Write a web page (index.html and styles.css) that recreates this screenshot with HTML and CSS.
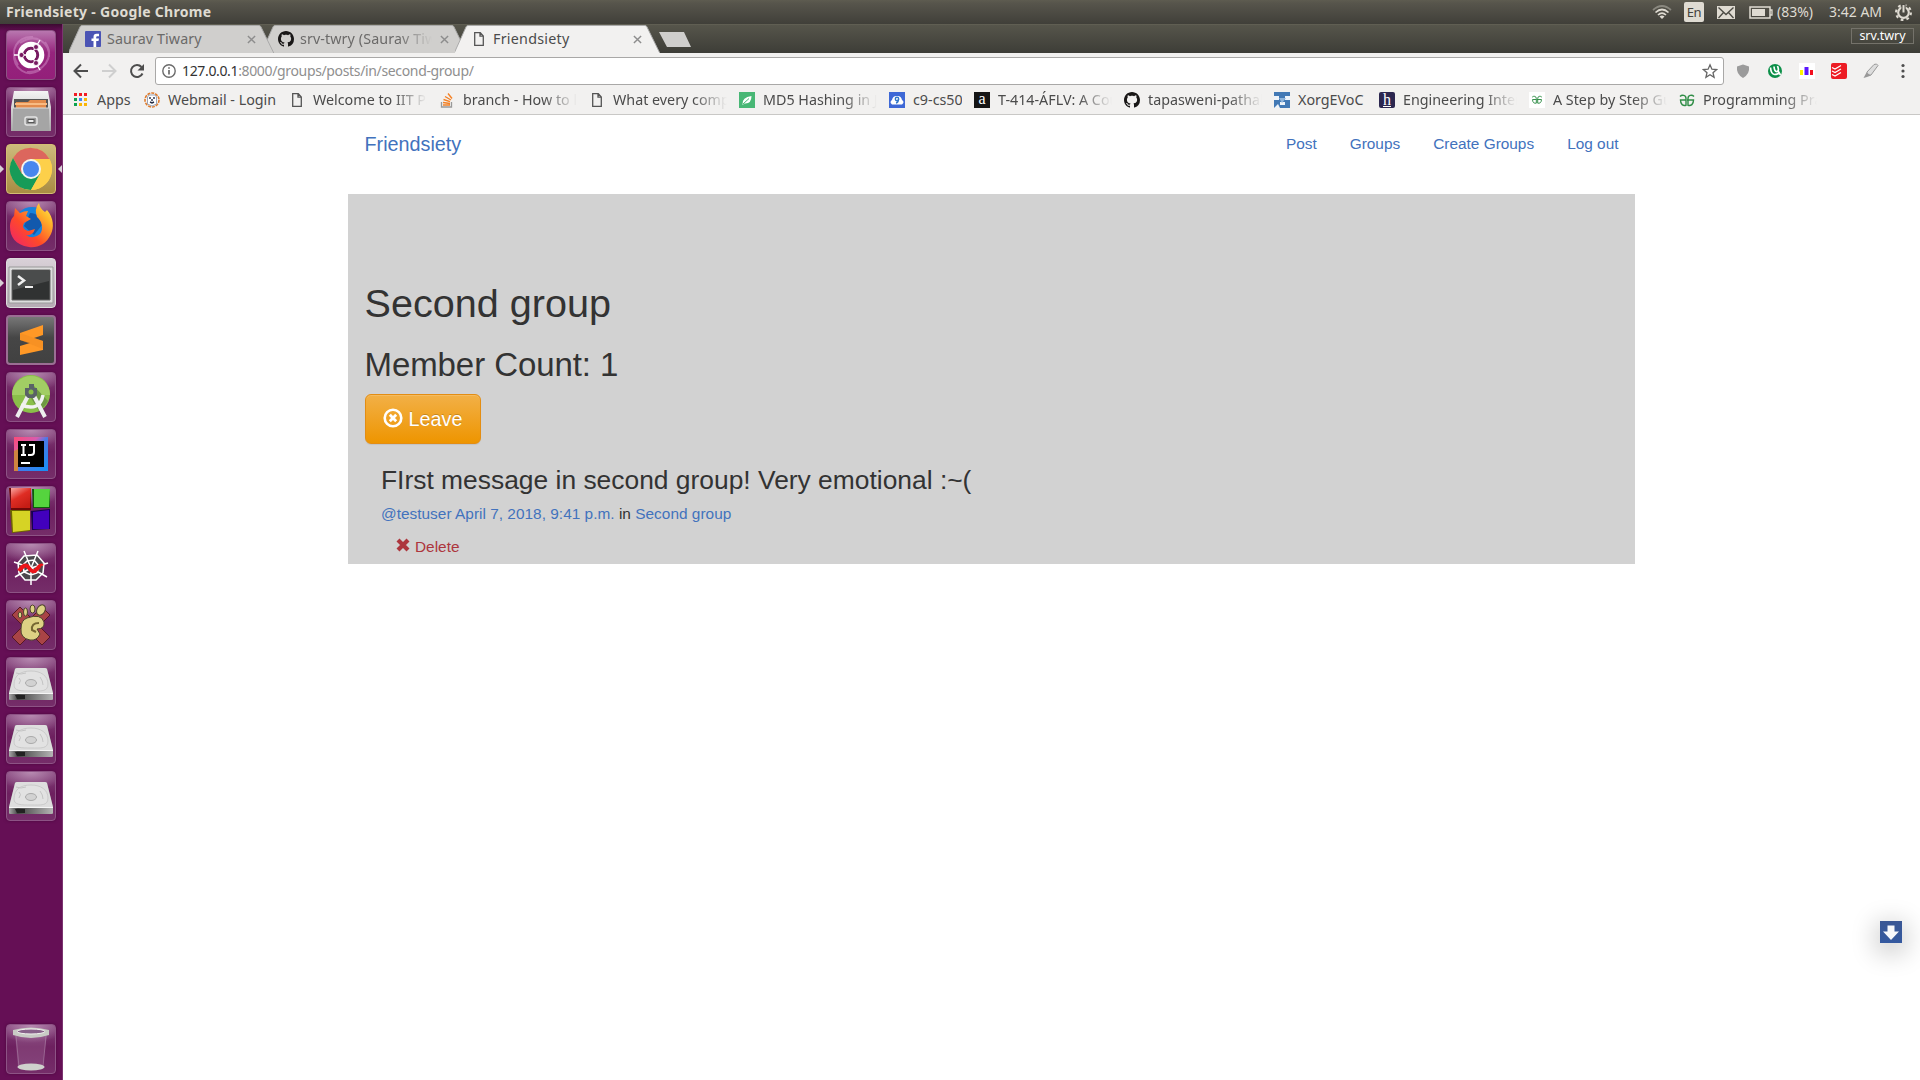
FILE: index.html
```html
<!DOCTYPE html>
<html lang="en">
<head>
<meta charset="utf-8">
<title>Friendsiety</title>
<link rel="stylesheet" href="styles.css">
</head>
<body>
<svg class="defs" aria-hidden="true">
  <defs>
    <linearGradient id="metal" x2="0" y2="1"><stop stop-color="#f4f4f4"/><stop offset="1" stop-color="#a8a8a8"/></linearGradient>
    <linearGradient id="side" x2="1"><stop stop-color="#aaa"/><stop offset=".2" stop-color="#444"/><stop offset="1" stop-color="#b5b5b5"/></linearGradient>
    <linearGradient id="fox" x1="0" y1="1" x2="1" y2="0"><stop stop-color="#ee1f72"/><stop offset=".4" stop-color="#ff4a28"/><stop offset=".75" stop-color="#ffb52a"/><stop offset="1" stop-color="#fff45a"/></linearGradient>
    <linearGradient id="idea" x2="1" y2="1"><stop stop-color="#fc4a77"/><stop offset=".35" stop-color="#d95cae"/><stop offset=".5" stop-color="#4a7ae8"/><stop offset="1" stop-color="#1590f5"/></linearGradient>
    <linearGradient id="red" x2=".6" y2="1"><stop stop-color="#f9aaa5"/><stop offset=".5" stop-color="#df2d24"/><stop offset="1" stop-color="#c51d15"/></linearGradient>
    <symbol id="page" viewBox="0 0 16 16"><path d="M3.7 1.7h5.6l3 3.2v9.4H3.7zM9 2v3.2h3" fill="none" stroke="#555" stroke-width="1.3"/></symbol>
    <symbol id="octocat" viewBox="0 0 16 16"><path fill="#191717" d="M8 0C3.58 0 0 3.58 0 8c0 3.54 2.29 6.53 5.47 7.59.4.07.55-.17.55-.38 0-.19-.01-.82-.01-1.49-2.01.37-2.53-.49-2.69-.94-.09-.23-.48-.94-.82-1.13-.28-.15-.68-.52-.01-.53.63-.01 1.08.58 1.23.82.72 1.21 1.87.87 2.33.66.07-.52.28-.87.51-1.07-1.78-.2-3.64-.89-3.64-3.95 0-.87.31-1.59.82-2.15-.08-.2-.36-1.02.08-2.12 0 0 .67-.21 2.2.82.64-.18 1.32-.27 2-.27s1.36.09 2 .27c1.53-1.04 2.2-.82 2.2-.82.44 1.1.16 1.92.08 2.12.51.56.82 1.27.82 2.15 0 3.07-1.87 3.75-3.65 3.95.29.25.54.73.54 1.48 0 1.07-.01 1.93-.01 2.2 0 .21.15.46.55.38A8 8 0 0 0 16 8c0-4.42-3.58-8-8-8z"/></symbol>
    <symbol id="close" viewBox="0 0 10 10"><path d="M1 1l8 8M9 1L1 9" stroke="#8d8d8d" stroke-width="1.6"/></symbol>
    <symbol id="geeks" viewBox="0 0 16 16"><path d="M1 4.500C3 2.500 7 3 7 6.500V13.300C4 14 1.500 12.500 1.500 8H7M15 4.500C13 2.500 9 3 9 6.500V13.300C12 14 14.500 12.500 14.500 8H8" fill="none" stroke="#2f8d46" stroke-width="1.4"/></symbol>
    <symbol id="tabshape" viewBox="0 0 205 28"><path d="M-1 28.500L11 2Q11.500 .5 13 .5H190Q191.500 .5 192 2L205 28.500z" stroke="#aaa"/></symbol>
    <symbol id="disk" viewBox="0 0 50 50">
      <path d="M9 12Q9.500 11 11 11H39Q40.500 11 41 12L47 36V42Q47 43 45 43H5Q3 43 3 42V36z" fill="#777"/>
      <path d="M9 12Q9.500 11 11 11H39Q40.500 11 41 12L47 36H3z" fill="#dedede"/>
      <path d="M3 36H47V42Q47 43 45 43H5Q3 43 3 42z" fill="url(#side)"/><path d="M3 36.500H47" stroke="#f5f5f5"/>
      <path d="M8 28C8 18 15 14 25 14S42 19 42 27 35 34 25 34 8 34 8 28z" fill="#e2e2e2" stroke="#c4c4c4" stroke-width=".8"/>
      <ellipse cx="25" cy="26" rx="5.500" ry="3.500" fill="#d2d2d2" stroke="#aaa"/>
      <path d="M10 16q5 2 10 0M34 20q3 4 3 8M13 21q3 2 0 6" fill="none" stroke="#c4c4c4"/><path d="M9 38H19V42H11z" fill="#222"/>
    </symbol>
  </defs>
</svg>

<header class="panel">
  <div class="panel-title">Friendsiety - Google Chrome</div>
  <div class="indicators">
    <svg class="wifi" viewBox="0 0 20 14"><g fill="none" stroke="#dfdbd2" stroke-width="1.700"><path d="M1 5Q10-3 19 5" opacity=".4"/><path d="M3.500 7.500Q10 1.500 16.500 7.500"/><path d="M6 10Q10 6 14 10"/></g><path d="M7.500 11.500Q10 9.500 12.500 11.500L10 14z" fill="#dfdbd2"/></svg>
    <span class="lang">En</span>
    <svg class="mail" viewBox="0 0 18 13"><path d="M0 0H18V13H0z" fill="#dfdbd2"/><path d="M1.500 1.500L9 8.500 16.500 1.500M1.500 12L6.500 6.500M16.500 12L11.500 6.500" fill="none" stroke="#4b4a43" stroke-width="1.300"/></svg>
    <svg class="battery" viewBox="0 0 24 13"><path d="M1 1H21V12H1z" fill="none" stroke="#dfdbd2" stroke-width="1.500"/><path d="M3 3H16V10H3z" fill="#dfdbd2"/><path d="M21 4H23V9H21" fill="none" stroke="#dfdbd2" stroke-width="1.300"/></svg>
    <span class="percent">(83%)</span>
    <span class="clock">3:42 AM</span>
    <svg class="cog" viewBox="0 0 16 16"><circle cx="8" cy="8" r="5" fill="none" stroke="#dfdbd2" stroke-width="2"/><circle cx="8" cy="8" r="7" fill="none" stroke="#dfdbd2" stroke-width="2" stroke-dasharray="2.600 2.898"/><path d="M6 0h4v8H6z" fill="#4c4b44"/><path d="M8 1v7" stroke="#dfdbd2" stroke-width="1.900"/></svg>
  </div>
</header>

<div class="desktop">
  <aside class="launcher">
    <div class="tile dash"><svg viewBox="0 0 50 50"><g fill="none" stroke="#d99bd0" stroke-width="2" opacity=".45"><path d="M12 35C2 20 12 6 27 7"/><path d="M14 13C30 2 44 13 43 27"/><path d="M39 12C50 28 36 43 21 42"/><path d="M35 39C21 49 7 39 8 23"/></g><circle cx="25" cy="25" r="13.300" fill="#fff"/><circle cx="25" cy="25" r="6.700" fill="none" stroke="#771a61" stroke-width="3"/><path d="M25 25L34 40M25 25L34 10M25 25H8" stroke="#fff" stroke-width="1.300"/><circle cx="25" cy="25" r="5.200" fill="#fff"/><g fill="#771a61" stroke="#fff" stroke-width=".8"><circle cx="15.500" cy="25" r="2.500"/><circle cx="30" cy="17" r="2.500"/><circle cx="30" cy="33" r="2.500"/></g></svg></div>
    <div class="tile"><svg viewBox="0 0 50 50"><path d="M8 4H42L45 20V44H5V20z" fill="url(#metal)"/><path d="M8 12H42V21H8z" fill="#555"/><path d="M10 15H22L24 13H40V22H10z" fill="#e38b4b"/><path d="M9 17H41" stroke="#f8bb82" stroke-width="2"/><path d="M7 21H43V44H7z" fill="#a5a5a5"/><path d="M7 21H43" stroke="#ddd"/><rect x="19" y="30" width="12" height="8" rx="2" fill="#999" stroke="#e4e4e4" stroke-width="1.500"/><rect x="22" y="32.500" width="6" height="3" fill="#eee" stroke="#555"/></svg></div>
    <div class="tile chrome running focused"><svg viewBox="0 0 50 50"><circle cx="25" cy="25" r="21" fill="#fdd04a"/><path d="M7 14A21 21 0 0 1 43.500 15H25L16 30z" fill="#dc665d"/><path d="M7 14A21 21 0 0 0 25 46L34 30 16 30z" fill="#179b58"/><path d="M25 46A21 21 0 0 0 43.500 15H25L34 30z" fill="#fdd04a"/><circle cx="25" cy="25" r="10" fill="#f5f5ee"/><circle cx="25" cy="25" r="8" fill="#4886ee"/></svg></div>
    <div class="tile"><svg viewBox="0 0 50 50"><circle cx="26" cy="24" r="18" fill="#1683dd"/><path d="M24 12Q34 12 36 24L28 34 18 25z" fill="#1259ad"/><path d="M9 7L14 12Q18 10 22 10L20 15 25 18 18 22Q15 28 22 30L29 28Q27 35 20 34 27 39 34 33C38 28 36 20 31 16Q28 8 33 2 34 8 39 11L41 9C48 17 48 27 45 33 40 44 31 47 23 46 9 44 4 35 4 26 4 20 6 17 8 15z" fill="url(#fox)"/></svg></div>
    <div class="tile terminal running"><svg viewBox="0 0 50 50"><path d="M3 9H47V45H3z" fill="#ddd" stroke="#999"/><path d="M6 12H44V42H6z" fill="#303232" stroke="#666"/><path d="M7 13H43V23L7 32z" fill="#4a4c4c"/><path d="M12 18L18 22.500 12 27" fill="none" stroke="#eee" stroke-width="2.500"/><path d="M19 29H27" stroke="#eee" stroke-width="2"/></svg></div>
    <div class="tile sublime"><svg viewBox="0 0 50 50"><path d="M14 18L37 10V20L28 23 37 26V35L14 40V31L24 28 14 25z" fill="#ff9826"/><path d="M14 25V18L37 26V34z" fill="#f08a20" opacity=".5"/></svg></div>
    <div class="tile"><svg viewBox="0 0 50 50"><circle cx="25" cy="22" r="19" fill="#8abf49"/><path d="M6 23A19 19 0 0 1 44 23z" fill="#a2ce64"/><path d="M28 14L42 29Q38 36 33 39L23 23z" fill="#6e9843"/><path d="M23 22L11 45M27 22L39 45" stroke="#eee" stroke-width="4"/><path d="M15 33Q34 40 37 23" fill="none" stroke="#f2f2f2" stroke-width="3.500"/><path d="M23 12H28V16H31V23L28 26H22L19 23V16H23z" fill="#5a6267"/><circle cx="25" cy="20" r="2.500" fill="#8abf49"/></svg></div>
    <div class="tile"><svg viewBox="0 0 50 50"><path d="M8 8H42V42H8z" fill="url(#idea)"/><path d="M8 22L12 20V42H8z" fill="#ce8440"/><path d="M12 12H38V38H12z" fill="#000"/><path d="M15 16H20M17.500 16V26M15 26H20M23 16H28V23Q28 26 25 26H22" fill="none" stroke="#fff" stroke-width="2"/><path d="M15 34H24" stroke="#fff" stroke-width="2"/></svg></div>
    <div class="tile"><svg viewBox="0 0 50 50"><path d="M3 2H25V24H5z" fill="#6f0808"/><path d="M5 2H25L24 22H5z" fill="url(#red)"/><path d="M26 3H44V22H27z" fill="#0b5c0b"/><path d="M28 3H44L43 21H28z" fill="#55d43e"/><path d="M4 24H24V45L6 47z" fill="#6d6500"/><path d="M6 25H24V44L7 46z" fill="#d6d325"/><path d="M25 25L44 23V43L26 44z" fill="#150053"/><path d="M27 26L43 24V43H27z" fill="#4200bd"/></svg></div>
    <div class="tile"><svg viewBox="0 0 50 50"><path d="M18 13L31 12 38 20 37 30 30 37H19L13 30 12 20z" fill="#4c484d"/><path d="M18 13L31 12 38 20 37 30 30 37H19L13 30 12 20zM21 18L28 17 33 23 31 30 25 32 18 29 17 22zM25 25L18 8M25 25L32 8M25 25L42 20M25 25L41 34M25 25V42M25 25L9 34M25 25L8 19" fill="none" stroke="#fff" stroke-width="1.500"/><path d="M13 28Q19 19 23 25T31 26T36 23" fill="none" stroke="#ed151a" stroke-width="4"/></svg></div>
    <div class="tile"><svg viewBox="0 0 50 50"><path d="M6 15L14 7 25 18 36 7 44 15 33 26 44 37 36 45 25 34 14 45 6 37 17 26z" fill="#a94446" stroke="#571824"/><path d="M21 18Q35 13 38 22 39 29 31 29L34 34Q31 41 24 40 14 38 15 29 15 20 21 18z" fill="#ddd184" stroke="#4d432d"/><path d="M33 23Q25 23 26 30L30 32" fill="none" stroke="#756732" stroke-width="2"/><g fill="#ddd184" stroke="#4d432d"><ellipse cx="35" cy="10" rx="4" ry="5.500" transform="rotate(30 35 10)"/><ellipse cx="26.500" cy="9" rx="2.500" ry="4"/><ellipse cx="19.500" cy="12" rx="2" ry="4"/><ellipse cx="14" cy="15" rx="1.800" ry="3"/></g></svg></div>
    <div class="tile"><svg><use href="#disk"/></svg></div>
    <div class="tile"><svg><use href="#disk"/></svg></div>
    <div class="tile"><svg><use href="#disk"/></svg></div>
    <div class="tile trash"><svg viewBox="0 0 50 50"><path d="M9 10H41L37 43Q25 49 12 43z" fill="#c7a5c4" opacity=".2"/><path d="M10 12L13 43M40 12L37 43" stroke="#c0a3bf" opacity=".4"/><ellipse cx="25" cy="43" rx="13.500" ry="3.500" fill="#cfd1cc"/><path d="M7 6Q25 1 43 6V11Q25 17 7 11z" fill="#c9cbc5"/><ellipse cx="25" cy="7.500" rx="14" ry="2.500" fill="#88628a" stroke="#f1f1ee"/></svg></div>
  </aside>

  <main class="browser">
    <div class="tabstrip">
      <div class="tab back1"><svg class="shape"><use href="#tabshape"/></svg>
        <svg class="ico" viewBox="0 0 16 16"><rect width="16" height="16" rx="1" fill="#4b54b4"/><path d="M8.500 16V10H6.500V7.500H8.500V6Q8.500 2.800 11.500 2.800H14V5.200H12.300Q11.200 5.200 11.200 6.300V7.500H14L13.500 10H11.200V16z" fill="#fff"/></svg>
        <span class="tab-text">Saurav Tiwary</span><svg class="x"><use href="#close"/></svg></div>
      <div class="tab back2"><svg class="shape"><use href="#tabshape"/></svg>
        <svg class="ico"><use href="#octocat"/></svg>
        <span class="tab-text fade">srv-twry (Saurav Tiwary)</span><svg class="x"><use href="#close"/></svg></div>
      <div class="tab active"><svg class="shape"><use href="#tabshape"/></svg>
        <svg class="ico"><use href="#page"/></svg>
        <span class="tab-text">Friendsiety</span><svg class="x"><use href="#close"/></svg></div>
      <div class="newtab"></div>
      <div class="profile">srv.twry</div>
    </div>
    <div class="toolbar">
      <svg class="nav" viewBox="0 0 16 16"><path d="M15 8H2M8 1.500L1.500 8 8 14.500" fill="none" stroke="#4d4d4d" stroke-width="2"/></svg>
      <svg class="nav" viewBox="0 0 16 16"><path d="M1 8H14M8 1.500L14.500 8 8 14.500" fill="none" stroke="#cfcfcf" stroke-width="2"/></svg>
      <svg class="nav" viewBox="0 0 16 16"><path d="M13.500 10.500A6 6 0 1 1 12.500 4" fill="none" stroke="#4d4d4d" stroke-width="2"/><path d="M15 1V7.500H8.500z" fill="#4d4d4d"/></svg>
      <div class="omnibox">
        <svg class="info" viewBox="0 0 14 14"><circle cx="7" cy="7" r="6.200" fill="none" stroke="#6b6b6b" stroke-width="1.400"/><path d="M7 6V10.500M7 3.300V4.800" stroke="#6b6b6b" stroke-width="1.700"/></svg>
        <span class="url"><b>127.0.0.1</b>:8000/groups/posts/in/second-group/</span>
        <svg class="star" viewBox="0 0 16 16"><path d="M8 1.800L9.900 6.200 14.600 6.600 11 9.700 12.100 14.300 8 11.800 3.900 14.300 5 9.700 1.400 6.600 6.100 6.200z" fill="none" stroke="#666" stroke-width="1.300"/></svg>
      </div>
      <div class="extensions">
        <svg viewBox="0 0 16 16"><path d="M8 1.500L14 3.500Q15 11 8 15 1 11 2 3.500z" fill="#9b9b9b"/></svg>
        <svg viewBox="0 0 16 16"><circle cx="8" cy="8" r="7" fill="#0b8f48"/><path d="M3.500 4.500Q4 11 7.500 11.500M7 3.500Q7.500 9 10 8.500T10.500 3M7.500 11.500Q11 11.500 12 9.500L13.500 12" fill="none" stroke="#fff" stroke-width="1.700"/></svg>
        <svg viewBox="0 0 16 16"><path d="M0 0H16V16H0z" fill="#fff"/><path d="M1 7H4V12H1z" fill="#fff200"/><path d="M5.500 4H9.500V12H5.500z" fill="#5a16ff"/><path d="M11 7H14V12H11z" fill="#f20e1d"/></svg>
        <svg viewBox="0 0 16 16"><rect width="16" height="16" rx="2" fill="#ed1c24"/><path d="M1 4.500L4 6 10 2.500M1 8L4 9.500 10 6M1 11.500L4 13 10 9.500" fill="none" stroke="#fff" stroke-width="1.200"/></svg>
        <svg viewBox="0 0 16 16"><path d="M4 9L11 1.500Q14 0 15 2.500L8 12 4 12.500z" fill="#ddd" stroke="#999"/><path d="M3.500 9.500L8 12.500 4 14 .5 15z" fill="#999"/></svg>
        <svg viewBox="0 0 16 16"><g fill="#4d4d4d"><circle cx="8" cy="2.500" r="1.600"/><circle cx="8" cy="8" r="1.600"/><circle cx="8" cy="13.500" r="1.600"/></g></svg>
      </div>
    </div>
    <div class="bookmarks">
      <div class="bm apps"><svg viewBox="0 0 16 16"><g fill="#f21b24"><path d="M1 1h3v3H1zM6 1h3v3H6zM11 1h3v3h-3z"/></g><path d="M1 6h3v3H1zM1 11h3v3H1z" fill="#0ba24f"/><path d="M6 6h3v3H6z" fill="#4285f4"/><path d="M11 6h3v3h-3zM6 11h3v3H6zM11 11h3v3h-3z" fill="#fbb605"/></svg><span>Apps</span></div>
      <div class="bm webmail"><svg viewBox="0 0 16 16"><circle cx="8" cy="8" r="7" fill="#f4f4f6" stroke="#e07b2b" stroke-width="1.600" stroke-dasharray="3 1"/><path d="M3.500 12V5L5 3H11L12.500 5V12L8 14z" fill="#fff" stroke="#9ba4b6"/><path d="M6 5V7M10 5V7M8 7V9M6 10L8 11 10 10" fill="none" stroke="#222b43" stroke-width="1.400"/></svg><span>Webmail - Login</span></div>
      <div class="bm"><svg><use href="#page"/></svg><span class="fade">Welcome to IIT Patna</span></div>
      <div class="bm"><svg viewBox="0 0 16 16"><path d="M2.500 10V15H12.500V10" fill="none" stroke="#999" stroke-width="1.300"/><path d="M4 13H11M4 10.500L11 11.500M4.500 7.500L11 9.700M6 4.500L12 8M9 1.500L13 6.500" stroke="#f48024" stroke-width="1.400"/></svg><span class="fade">branch - How to list</span></div>
      <div class="bm"><svg><use href="#page"/></svg><span class="fade">What every computer</span></div>
      <div class="bm"><svg viewBox="0 0 16 16"><path d="M0 0H16V16H0z" fill="#48b775"/><path d="M3.500 12.500Q3 5 12.500 4 12.500 12 5.500 11.500L3.500 13z" fill="#fff"/><path d="M4 12L10 6.500" stroke="#48b775"/></svg><span class="fade">MD5 Hashing in Java</span></div>
      <div class="bm c9"><svg viewBox="0 0 16 16"><path d="M0 0H16V16H0z" fill="#3e68d6"/><path d="M3 12.500Q0 10 3 8 4 3.500 8 4 12 3.500 13 8 16 10 13 12.500z" fill="#fff"/><circle cx="8" cy="7" r="1.700" fill="none" stroke="#3478c9" stroke-width="1.400"/><path d="M9.500 7Q9.500 10.500 7 11" fill="none" stroke="#3478c9" stroke-width="1.400"/></svg><span>c9-cs50</span></div>
      <div class="bm"><i class="letter">a</i><span class="fade">T-414-ÁFLV: A Course</span></div>
      <div class="bm"><svg><use href="#octocat"/></svg><span class="fade">tapasweni-pathak</span></div>
      <div class="bm xorg"><svg viewBox="0 0 16 16"><path d="M0 0H16V16H0z" fill="#4279b5"/><path d="M0 4H5V8H0zM11 4H16V8H11zM6 10H11V13H6zM0 16L4 12 6 16z" fill="#edf3fa"/><path d="M5 6L8 11 12 6z" fill="#8fb5dc"/></svg><span>XorgEVoC</span></div>
      <div class="bm"><i class="letter h">h</i><span class="fade">Engineering Internship</span></div>
      <div class="bm"><svg viewBox="0 0 16 16"><path d="M0 0H16V16H0z" fill="#fff"/><use href="#geeks" x="1.500" y="2" width="13" height="11"/></svg><span class="fade">A Step by Step Guide</span></div>
      <div class="bm"><svg><use href="#geeks"/></svg><span class="fade">Programming Practice</span></div>
    </div>

    <div class="webpage">
      <nav class="navbar">
        <a class="brand">Friendsiety</a>
        <div class="links"><a>Post</a><a>Groups</a><a>Create Groups</a><a>Log out</a></div>
      </nav>
      <section class="content">
        <h1>Second group</h1>
        <h2>Member Count: 1</h2>
        <a class="leave"><svg viewBox="0 0 20 20"><circle cx="10" cy="10" r="8.300" fill="none" stroke="#fff" stroke-width="2.600"/><path d="M6.800 6.800L13.200 13.200M13.200 6.800L6.800 13.200" stroke="#fff" stroke-width="2.800"/></svg>Leave</a>
        <article class="post">
          <h3>FIrst message in second group! Very emotional :~(</h3>
          <p class="meta"><a>@testuser</a> <a>April 7, 2018, 9:41 p.m.</a> in <a>Second group</a></p>
          <a class="delete"><svg viewBox="0 0 14 14"><path d="M2 2L12 12M12 2L2 12" stroke="#ad363d" stroke-width="4.200"/></svg>Delete</a>
        </article>
      </section>
    </div>
  </main>
</div>
<div class="download"><svg viewBox="0 0 22 22"><path d="M7.500 4.500H14.500V10.500H19L11 19 3 10.500H7.500z" fill="#f7f8fb"/></svg></div>
</body>
</html>
```
FILE: styles.css
```css
* { box-sizing: border-box; }
body { margin: 0; width: 1920px; height: 1080px; overflow: hidden; background: #fff; font-family: "Noto Sans", sans-serif; position: relative; }
.defs { position: absolute; width: 0; height: 0; }
svg { display: block; flex: none; }

.panel { height: 24px; display: flex; justify-content: space-between; background: linear-gradient(#5e5c50 0, #57554c 3px, #403f39 100%); color: #dfdbd2; font-size: 14px; line-height: 24px; }
.panel-title { padding-left: 6px; font-weight: 700; font-size: 14px; letter-spacing: .3px; }
.indicators { display: flex; align-items: center; padding-right: 8px; white-space: nowrap; }
.wifi { width: 20px; height: 14px; margin-right: 12px; }
.lang { width: 20px; height: 20px; background: #dfdbd2; color: #44433d; border-radius: 2px; font-size: 13px; line-height: 20px; text-align: center; margin-right: 13px; letter-spacing: -.5px; }
.mail { width: 18px; height: 13px; margin-right: 14px; }
.battery { width: 24px; height: 13px; margin-right: 4px; }
.percent { width: 38px; margin-right: 14px; letter-spacing: 0; }
.clock { width: 55px; margin-right: 11px; letter-spacing: 0; }
.cog { width: 17px; height: 17px; }

.desktop { display: flex; height: 1056px; }
.launcher { width: 63px; flex: none; display: flex; flex-direction: column; gap: 7px; padding: 6px 0 6px 6px; background: linear-gradient(#3c0a31, #650f55 7px); border-right: 1px solid #7b3470; }
.tile { width: 50px; height: 50px; flex: none; position: relative; border-radius: 4px; border: 1px solid #8d5385; background: radial-gradient(ellipse 35px 18px at 50% 0, #b78bb1, transparent), linear-gradient(#84437b, #6d205f 45%, #752d69); box-shadow: 0 0 3px #4a083d; }
.tile svg { width: 50px; height: 50px; margin: -1px; }
.dash { background: linear-gradient(#b877af, #96247d 45%, #941f7a); }
.chrome { background: linear-gradient(#cdba7c, #a98c43); border-color: #d4bd73; }
.terminal { background: linear-gradient(#d9d1d8, #b6abb4); border-color: #ddd; }
.sublime { background: linear-gradient(#777, #464646 45%, #414141); border: 2px solid #9b6e94; }
.sublime svg { margin: -2px; }
.running::before { content: ""; position: absolute; left: -7px; top: 20px; border: 4px solid transparent; border-left-color: #d8cfd6; border-right: 0; }
.focused::after { content: ""; position: absolute; right: -7px; top: 20px; border: 4px solid transparent; border-right-color: #d8cfd6; border-left: 0; }
.trash { margin-top: auto; }

.browser { flex: 1; min-width: 0; color: #4b4b4b; }
.tabstrip { height: 29px; display: flex; padding: 1px 6px 0 6px; background: linear-gradient(#69675a 0, #56554b 1px, #3d3d37 100%); }
.tab { position: relative; width: 205px; height: 28px; flex: none; display: flex; align-items: center; padding: 0 18px 0 16px; margin-right: -12px; font-size: 14.300px; color: #6b6a69; }
.tab .shape { position: absolute; left: 0; top: 0; width: 205px; height: 28px; fill: #d0cfcd; overflow: hidden; }
.tab > .ico, .tab > .x, .tab-text { position: relative; }
.ico { width: 16px; height: 16px; }
.tab-text { margin-left: 6px; width: 132px; overflow: hidden; white-space: nowrap; line-height: 24px; letter-spacing: .1px; }
.x { width: 9px; height: 9px; margin-left: 8px; }
.back1 { z-index: 2; }
.active { z-index: 3; color: #4b4b4b; }
.active .shape { fill: #f2f1f0; }
.active .tab-text { letter-spacing: .25px; }
.newtab { width: 32px; height: 15px; margin: 7px 0 0 11px; background: #cfcecc; clip-path: polygon(0 0, 25px 0, 100% 100%, 8px 100%); }
.profile { margin: 3px 0 0 auto; width: 63px; height: 16px; border: 1px solid #74726a; color: #fff; font-size: 12.500px; line-height: 14px; text-align: center; }
.fade { -webkit-mask-image: linear-gradient(90deg, #000 calc(100% - 34px), transparent); mask-image: linear-gradient(90deg, #000 calc(100% - 34px), transparent); }

.toolbar { height: 35px; display: flex; align-items: center; background: #f2f1f0; padding: 0 10px; gap: 12px; }
.nav { width: 16px; height: 16px; }
.omnibox { width: 1569px; height: 28px; margin-left: -2px; flex: none; display: flex; align-items: center; background: #fff; border: 1px solid #a9a8a7; border-radius: 3px; padding: 0 5px 0 6px; }
.info { width: 14px; height: 14px; }
.url { margin-left: 6px; flex: 1; font-size: 14px; color: #8f8f8f; letter-spacing: -.35px; }
.url b { font-weight: 400; color: #333; }
.star { width: 16px; height: 16px; }
.extensions { display: flex; gap: 16px; margin-left: -1px; }
.extensions svg { width: 16px; height: 16px; }

.bookmarks { height: 27px; display: flex; gap: 12px; padding: 0 0 3px 10px; align-items: center; background: #f2f1f0; border-bottom: 1px solid #c9c8c6; font-size: 14.300px; }
.bm { display: flex; align-items: center; gap: 8px; flex: none; }
.bm svg { width: 16px; height: 16px; }
.bm span { width: 114px; overflow: hidden; white-space: nowrap; line-height: 22px; }
.bm.apps span { width: 35px; }
.bm.webmail span { width: 109px; }
.bm.c9 span { width: 49px; }
.bm.xorg span { width: 69px; }
.letter { width: 16px; height: 16px; background: #151515; color: #fff; font: 16px/14px "Liberation Serif", serif; text-align: center; }
.letter.h { background: #2c2750; border-radius: 2px; text-decoration: underline; line-height: 15px; }

.webpage { width: 1287px; margin-left: 285px; font: 15.400px/22px "Liberation Sans", sans-serif; color: #333; }
.webpage a { color: #4272bd; }
.navbar { height: 57px; margin-bottom: 22px; padding: 0 16.500px; display: flex; justify-content: space-between; align-items: center; }
.navbar .brand { font-size: 19.800px; }
.links { display: flex; gap: 33px; }
.content { height: 370px; padding: 88px 16.500px 0; background: #d2d2d2; }
h1, h2, h3, p { margin: 0; font-weight: 400; }
h1 { font-size: 39.600px; line-height: 43.560px; margin-bottom: 21px; }
h2 { font-size: 33px; line-height: 36.300px; margin-bottom: 11.500px; letter-spacing: -.08px; }
.webpage .leave { width: 116px; height: 50px; display: flex; align-items: center; padding-left: 17px; gap: 6px; background: linear-gradient(#f2b047, #ee9500); border: 1px solid #e38d13; border-radius: 6px; color: #fff; font-size: 19.800px; text-shadow: 0 -1px 0 rgba(0,0,0,.2); box-shadow: inset 0 1px 0 rgba(255,255,255,.15), 0 1px 1px rgba(0,0,0,.075); }
.leave svg { width: 20px; height: 20px; margin-top: -3px; }
.post { padding: 22px 16.500px 0; }
h3 { font-size: 26.400px; line-height: 29px; margin-bottom: 8px; }
.meta { letter-spacing: .02px; }
.webpage .delete { display: flex; align-items: center; gap: 5px; margin: 11px 0 0 15px; color: #ad363d; }
.delete svg { width: 14px; height: 14px; margin-top: -4px; }

.download { position: absolute; left: 1880px; top: 921px; width: 22px; height: 22px; background: linear-gradient(#3a5795, #3459a0); box-shadow: 0 6px 24px 5px rgba(0,0,0,.18); }
```
